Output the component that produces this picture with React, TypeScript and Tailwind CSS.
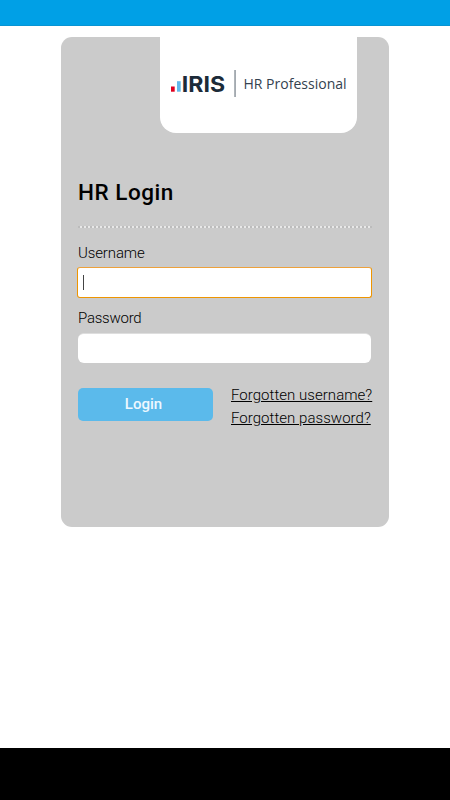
import React from "react";

function Logo() {
  return (
    <svg width="197" height="96" viewBox="160 37 197 96" role="img" aria-label="IRIS HR Professional">
      <rect x="171" y="86.5" width="3.7" height="5.2" fill="#e0001f" />
      <rect x="177" y="81.2" width="3.7" height="10.5" fill="#62b9ec" />
      <text x="181.8" y="91.7" textLength="43.3" lengthAdjust="spacingAndGlyphs" fill="#1c2b39" className="font-[Inter,sans-serif] text-[22px] font-bold">IRIS</text>
      <rect x="234.3" y="70" width="1.5" height="27" fill="#8e969d" />
      <text x="243.4" y="89" textLength="103.2" lengthAdjust="spacingAndGlyphs" fill="#34424f" className="font-['Open_Sans',sans-serif] text-[15px]">HR Professional</text>
    </svg>
  );
}

export default function App() {
  return (
    <div className="flex h-[800px] w-[450px] flex-col bg-white font-[Roboto,sans-serif] text-black">
      <header className="h-[26px] shrink-0 border-b border-[#0894d3] bg-[#00a0e6]" />
      <main className="flex-1 pt-[11px] pl-[61px]">
        <section className="h-[490px] w-[328px] rounded-[11px] bg-[#cbcbcb]">
          <div className="ml-[99px] h-24 w-[197px] overflow-hidden rounded-b-[16px] bg-white">
            <Logo />
          </div>
          <form className="ml-[17px] w-[294px]" onSubmit={(e) => e.preventDefault()}>
            <h1 className="mt-11 h-[30px] text-[22.5px] leading-[30px] font-medium tracking-[0.52px]">HR Login</h1>
            <div className="mt-[19px] h-[2px] bg-[repeating-linear-gradient(90deg,#bcbcbc_0_2px,#e8e8e8_2px_4px)]" />
            <label className="mt-[15px] block h-5 text-[15px] leading-5 font-light tracking-[-0.12px]">Username</label>
            <div className="mt-1 -ml-px flex h-[31px] w-[295px] items-center rounded-[3px] border border-[#ee9500] border-t-[#eda13c] bg-white pl-[5px]">
              <span className="h-[15px] w-px bg-[#444]" />
            </div>
            <label className="mt-[10px] block h-5 text-[15px] leading-5 font-light tracking-[-0.25px]">Password</label>
            <div className="mt-[5px] h-[30px] w-[293px] rounded-[6px] border-t border-[#dedede] bg-white" />
            <div className="mt-[21px] flex">
              <button className="mt-1 h-[33px] w-[135px] shrink-0 rounded-[5px] bg-[#5bbaeb] pr-1 text-[15px] leading-[33px] font-medium text-[#edf8ff]">Login</button>
              <div className="ml-[18px] flex shrink-0 flex-col items-start text-[15px] leading-[23px] font-light tracking-[0.04px] whitespace-nowrap">
                <a className="underline">Forgotten username?</a>
                <a className="underline">Forgotten password?</a>
              </div>
            </div>
          </form>
        </section>
      </main>
      <footer className="h-[52px] shrink-0 bg-black" />
    </div>
  );
}
